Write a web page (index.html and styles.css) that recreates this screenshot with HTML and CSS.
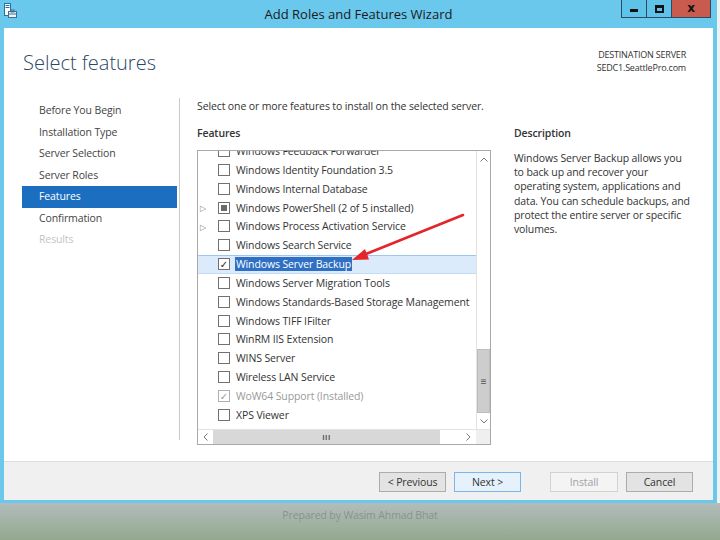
FILE: index.html
```html
<!DOCTYPE html>
<html lang="en">
  <head>
    <meta charset="UTF-8" />
    <title>Add Roles and Features Wizard</title>
    <link rel="stylesheet" href="styles.css">
  </head>
  <body>
    <div class="screen">
      <div class="window">
        <div class="titlebar">
          <div class="title-left">
            <svg class="app-icon" width="13" height="15" viewBox="0 0 13 15">
              <rect x="0.5" y="0.5" width="6" height="12" fill="#fff" stroke="#2a6fa0" />
              <rect x="1.5" y="2" width="4" height="1" fill="#2a6fa0" />
              <rect x="1.5" y="4" width="4" height="1" fill="#2a6fa0" />
              <rect x="4.5" y="8.5" width="8" height="6" fill="#f4f4f4" stroke="#3b6f95" />
              <rect x="7" y="7" width="3" height="2" fill="none" stroke="#3b6f95" />
              <rect x="4.5" y="10.5" width="8" height="1" fill="#3b6f95" />
            </svg>
          </div>
          <div class="title">Add Roles and Features Wizard</div>
          <div class="win-controls">
            <span class="wc wc-min"><i></i></span>
            <span class="wc wc-max"><i></i></span>
            <span class="wc wc-close">x</span>
          </div>
        </div>

        <div class="client">
          <div class="main">
            <div class="header">
              <h1>Select features</h1>
              <div class="dest">
                DESTINATION SERVER<br />SEDC1.SeattlePro.com
              </div>
            </div>

            <div class="body">
              <ul class="nav">
                <li>Before You Begin</li>
                <li>Installation Type</li>
                <li>Server Selection</li>
                <li>Server Roles</li>
                <li class="active">Features</li>
                <li>Confirmation</li>
                <li class="disabled">Results</li>
              </ul>

              <div class="content">
                <p class="intro">Select one or more features to install on the selected server.</p>
                <div class="columns">
                  <div class="features">
                    <h2>Features</h2>
                    <div class="listbox">
                      <div class="list-area">
                        <div class="list-viewport">
                          <ul class="tree">
                            <li><span class="exp"></span><span class="cb"></span>Windows Feedback Forwarder</li>
                            <li><span class="exp"></span><span class="cb"></span>Windows Identity Foundation 3.5</li>
                            <li><span class="exp"></span><span class="cb"></span>Windows Internal Database</li>
                            <li><span class="exp">&#9655;</span><span class="cb partial"></span>Windows PowerShell (2 of 5 installed)</li>
                            <li><span class="exp">&#9655;</span><span class="cb"></span>Windows Process Activation Service</li>
                            <li><span class="exp"></span><span class="cb"></span>Windows Search Service</li>
                            <li class="selected"><span class="exp"></span><span class="cb checked">&#10003;</span><span class="hl">Windows Server Backup</span></li>
                            <li><span class="exp"></span><span class="cb"></span>Windows Server Migration Tools</li>
                            <li><span class="exp"></span><span class="cb"></span>Windows Standards-Based Storage Management</li>
                            <li><span class="exp"></span><span class="cb"></span>Windows TIFF IFilter</li>
                            <li><span class="exp"></span><span class="cb"></span>WinRM IIS Extension</li>
                            <li><span class="exp"></span><span class="cb"></span>WINS Server</li>
                            <li><span class="exp"></span><span class="cb"></span>Wireless LAN Service</li>
                            <li class="installed"><span class="exp"></span><span class="cb checked">&#10003;</span>WoW64 Support (Installed)</li>
                            <li><span class="exp"></span><span class="cb"></span>XPS Viewer</li>
                          </ul>
                        </div>
                        <div class="vscroll">
                          <span class="sb-btn">
                            <svg width="8" height="5" viewBox="0 0 8 5"><path d="M0.5 4.5 L4 1 L7.5 4.5" fill="none" stroke="#777" /></svg>
                          </span>
                          <span class="sb-track"></span>
                          <span class="sb-thumb">&#8801;</span>
                          <span class="sb-btn down">
                            <svg width="8" height="5" viewBox="0 0 8 5"><path d="M0.5 0.5 L4 4 L7.5 0.5" fill="none" stroke="#777" /></svg>
                          </span>
                        </div>
                      </div>
                      <div class="hscroll">
                        <span class="sb-btn">
                          <svg width="5" height="8" viewBox="0 0 5 8"><path d="M4.5 0.5 L1 4 L4.5 7.5" fill="none" stroke="#777" /></svg>
                        </span>
                        <span class="sb-thumb-h">III</span>
                        <span class="sb-track-h"></span>
                        <span class="sb-btn">
                          <svg width="5" height="8" viewBox="0 0 5 8"><path d="M0.5 0.5 L4 4 L0.5 7.5" fill="none" stroke="#777" /></svg>
                        </span>
                        <span class="sb-corner"></span>
                      </div>
                    </div>
                  </div>

                  <div class="description">
                    <h2>Description</h2>
                    <p>
                      Windows Server Backup allows you<br />
                      to back up and recover your<br />
                      operating system, applications and<br />
                      data. You can schedule backups, and<br />
                      protect the entire server or specific<br />
                      volumes.
                    </p>
                  </div>
                </div>
              </div>
            </div>
          </div>

          <div class="footer">
            <button class="btn">&lt; Previous</button>
            <button class="btn btn-default">Next &gt;</button>
            <button class="btn btn-disabled">Install</button>
            <button class="btn">Cancel</button>
          </div>
        </div>
      </div>

      <div class="desktop-band">Prepared by Wasim Ahmad Bhat</div>

      <!-- annotation arrow drawn over the screenshot -->
      <svg class="red-arrow" width="720" height="540" viewBox="0 0 720 540">
        <line x1="463" y1="215" x2="366" y2="254" stroke="#e3262b" stroke-width="2.6" stroke-linecap="round" />
        <polygon points="352,260 369,259.5 365,249" fill="#e3262b" />
      </svg>
    </div>
  </body>
</html>
```

FILE: styles.css
```css
/* Global */
* {
  box-sizing: border-box;
}

body {
  margin: 0;
  font-family: "Open Sans", "Noto Sans", sans-serif;
  font-size: 10.5px;
  letter-spacing: -0.12px;
  color: #333;
}

.screen {
  position: relative;
  width: 720px;
  height: 540px;
  background: #eef2f2;
  display: flex;
  flex-direction: column;
  overflow: hidden;
}

/* Window frame */
.window {
  width: 717px;
  height: 503px;
  background: #6ac8ec;
  padding: 0 4px 3px 4px;
  display: flex;
  flex-direction: column;
}

.titlebar {
  height: 28px;
  display: grid;
  grid-template-columns: 1fr auto 1fr;
}

.title-left {
  padding: 3px 0 0 0;
}

.title {
  font-size: 13px;
  letter-spacing: 0;
  line-height: 28px;
  color: #1b1b1b;
}

.win-controls {
  justify-self: end;
  display: flex;
  height: 18px;
  margin-right: 2px;
  border: 1px solid #2c4c60;
  border-top: none;
}

.wc {
  width: 25px;
  height: 17px;
  display: flex;
  align-items: center;
  justify-content: center;
  background: #5fc2e8;
  border-right: 1px solid #2c4c60;
}

.wc-min i {
  width: 8px;
  height: 3px;
  margin-top: 4px;
  background: #111;
}

.wc-max i {
  width: 9px;
  height: 8px;
  border: 2px solid #111;
  border-top-width: 3px;
}

.wc-close {
  width: 38px;
  border-right: none;
  background: #c95a4e;
  font-family: "DejaVu Sans", sans-serif;
  font-weight: bold;
  font-size: 12px;
  color: #111;
  padding-bottom: 2px;
}

/* Client area */
.client {
  flex: 1;
  display: flex;
  flex-direction: column;
}

.main {
  height: 433px;
  background: #fff;
}

.header {
  height: 71px;
  display: flex;
  justify-content: space-between;
  padding: 0 27px 0 19px;
}

.header h1 {
  margin: 22px 0 0;
  font-size: 20px;
  letter-spacing: 0;
  line-height: 26px;
  font-weight: 300;
  color: #2b4864;
}

.dest {
  padding-top: 20px;
  text-align: right;
  font-size: 9px;
  line-height: 13px;
  color: #333;
  letter-spacing: -0.2px;
}

.body {
  display: flex;
}

/* Left navigation */
.nav {
  list-style: none;
  margin: -1px 0 0 18px;
  padding: 2px 0 0;
  width: 158px;
  height: 342px;
  border-right: 1px solid #c9c9c9;
}

.nav li {
  width: 155px;
  height: 21.5px;
  line-height: 21.5px;
  padding-left: 17px;
  color: #444;
}

.nav li.active {
  background: #1b6ec0;
  color: #fff;
}

.nav li.disabled {
  color: #c4c4c4;
}

/* Content */
.content {
  margin-left: 17px;
}

.intro {
  margin: 0;
  line-height: 14px;
  color: #333;
}

.columns {
  display: flex;
  gap: 23px;
}

.features h2,
.description h2 {
  margin: 13px 0 10px;
  font-size: 10.5px;
  line-height: 14px;
  font-weight: 600;
  color: #333;
}

.features {
  width: 294px;
}

.listbox {
  border: 1px solid #a9a9a9;
  height: 295px;
  display: flex;
  flex-direction: column;
}

.list-area {
  height: 278px;
  display: flex;
}

.list-viewport {
  width: 278px;
  overflow: hidden;
}

.tree {
  list-style: none;
  margin: -9.4px 0 0;
  padding: 0;
}

.tree li {
  height: 18.85px;
  display: flex;
  align-items: center;
  white-space: nowrap;
  color: #333;
}

.tree li.selected {
  background: #dcebfb;
  box-shadow: inset 0 1px 0 #9fc7ee, inset 0 -1px 0 #c4dcf4;
}

.tree li.installed {
  color: #9a9a9a;
}

.hl {
  background: #2f6fc4;
  color: #fff;
  padding: 0 1px;
  margin-left: -1px;
}

.exp {
  flex-shrink: 0;
  width: 20px;
  padding-left: 2px;
  font-size: 8px;
  color: #8a8a8a;
}

.cb {
  flex-shrink: 0;
  width: 12px;
  height: 12px;
  margin-right: 6px;
  border: 1px solid #707070;
  background: #fff;
  display: flex;
  align-items: center;
  justify-content: center;
  font-family: "DejaVu Sans", sans-serif;
  font-size: 10px;
  color: #222;
}

.cb.partial::after {
  content: "";
  width: 6px;
  height: 6px;
  background: #6b6b6b;
}

.installed .cb {
  border-color: #b0b0b0;
  color: #9a9a9a;
}

/* Scrollbars */
.vscroll {
  width: 14px;
  display: flex;
  flex-direction: column;
  border-left: 1px solid #e2e2e2;
}

.sb-btn {
  height: 17px;
  display: flex;
  align-items: center;
  justify-content: center;
}

.sb-btn.down {
  height: 16px;
}

.sb-track {
  flex: 1;
}

.sb-thumb {
  height: 64px;
  background: #cdcdcd;
  border: 1px solid #bdbdbd;
  display: flex;
  align-items: center;
  justify-content: center;
  font-size: 10px;
  color: #505050;
}

.hscroll {
  height: 15px;
  display: flex;
  border-top: 1px solid #e2e2e2;
}

.hscroll .sb-btn {
  width: 15px;
  height: 14px;
}

.sb-thumb-h {
  width: 227px;
  background: #d8d8d8;
  display: flex;
  align-items: center;
  justify-content: center;
  font-size: 7px;
  font-weight: bold;
  color: #555;
  letter-spacing: 0.5px;
}

.sb-track-h {
  width: 21px;
}

.sb-corner {
  flex: 1;
  background: #efefef;
}

/* Description */
.description h2 {
  margin-bottom: 11px;
}

.description p {
  margin: 0;
  line-height: 14.2px;
  color: #333;
}

/* Footer buttons */
.footer {
  flex: 1;
  background: #f0f0f0;
  border-top: 1px solid #dedede;
  display: flex;
  justify-content: flex-end;
  align-items: flex-start;
  gap: 8px;
  padding: 10px 20px 0 0;
}

.btn {
  width: 67px;
  height: 20px;
  font-family: "Open Sans", "Noto Sans", sans-serif;
  font-size: 10.5px;
  letter-spacing: -0.12px;
  color: #333;
  background: #e3e3e3;
  border: 1px solid #acacac;
  padding: 0;
}

.btn-default {
  background: #e5f1fb;
  border-color: #7eb4ea;
}

.btn-disabled {
  margin-left: 21px;
  width: 68px;
  background: #f4f4f4;
  border-color: #d2d2d2;
  color: #a2a2a2;
}

/* Slide area below the screenshot */
.desktop-band {
  flex: 1;
  background: linear-gradient(#b2bcbc, #93a98e);
  text-align: center;
  padding-top: 5px;
  line-height: 14px;
  color: #87938f;
}

.red-arrow {
  position: absolute;
  left: 0;
  top: 0;
  pointer-events: none;
}
```
